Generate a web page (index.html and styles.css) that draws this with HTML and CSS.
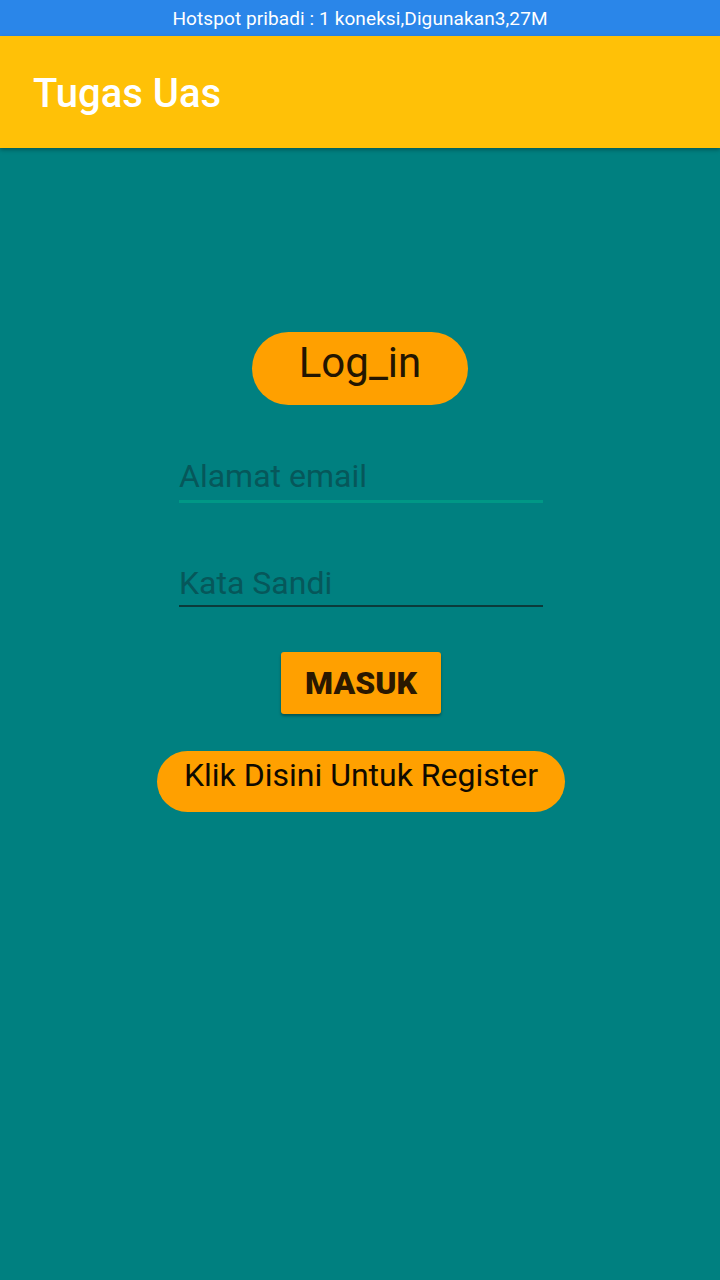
FILE: index.html
```html
<!DOCTYPE html>
<html>
<head>
<meta charset="utf-8">
<link rel="stylesheet" href="styles.css">
</head>
<body>
<div class="status-bar">Hotspot pribadi : 1 koneksi,Digunakan3,27M</div>
<header class="app-bar"><h1 class="title">Tugas Uas</h1></header>
<main class="content">
  <div class="pill-title">Log_in</div>
  <div class="field field-focused">Alamat email</div>
  <div class="field field-idle">Kata Sandi</div>
  <div class="btn-masuk">MASUK</div>
  <div class="btn-register">Klik Disini Untuk Register</div>
</main>
</body>
</html>
```
FILE: styles.css
```css
html, body {
  margin: 0;
  padding: 0;
  height: 100%;
}
body {
  background: #008080;
  font-family: Roboto, "Noto Sans", sans-serif;
}
.status-bar {
  height: 36px;
  background: #2a86e9;
  color: #ffffff;
  font-size: 19px;
  letter-spacing: 0.1px;
  display: flex;
  align-items: center;
  justify-content: center;
}
.app-bar {
  height: 112px;
  background: #ffc107;
  display: flex;
  align-items: center;
  padding: 4px 0 0 33px;
  box-sizing: border-box;
  box-shadow: 0 2px 4px rgba(0,0,0,0.3);
  position: relative;
}
.title {
  margin: 0;
  color: #ffffff;
  font-size: 40px;
  font-weight: 500;
  line-height: 48px;
}
.content {
  display: flex;
  flex-direction: column;
  align-items: center;
}
.pill-title {
  margin-top: 184px;
  width: 216px;
  height: 73px;
  box-sizing: border-box;
  padding-top: 6px;
  border-radius: 37px;
  background: #ffa000;
  color: #231500;
  font-size: 42px;
  line-height: 50px;
  text-align: center;
}
.field {
  width: 364px;
  height: 40px;
  margin-left: 2px;
  font-size: 32px;
  line-height: 40px;
  color: #06575a;
}
.field-focused {
  margin-top: 51px;
  padding-bottom: 4px;
  border-bottom: 3px solid #009886;
}
.field-idle {
  margin-top: 60px;
  padding-bottom: 2px;
  border-bottom: 2px solid #0b3b3b;
}
.btn-masuk {
  margin-top: 45px;
  width: 160px;
  height: 62px;
  border-radius: 3px;
  background: #ffa000;
  color: #2a1800;
  font-size: 32px;
  font-weight: 900;
  line-height: 38px;
  display: flex;
  align-items: center;
  justify-content: center;
  box-shadow: 0 2px 3px rgba(0,0,0,0.35);
  margin-left: 2px;
}
.btn-register {
  margin-top: 37px;
  width: 408px;
  height: 61px;
  border-radius: 31px;
  background: #ffa000;
  color: #0f0a00;
  font-size: 32px;
  line-height: 38px;
  padding-top: 5px;
  box-sizing: border-box;
  text-align: center;
  margin-left: 2px;
}
```
